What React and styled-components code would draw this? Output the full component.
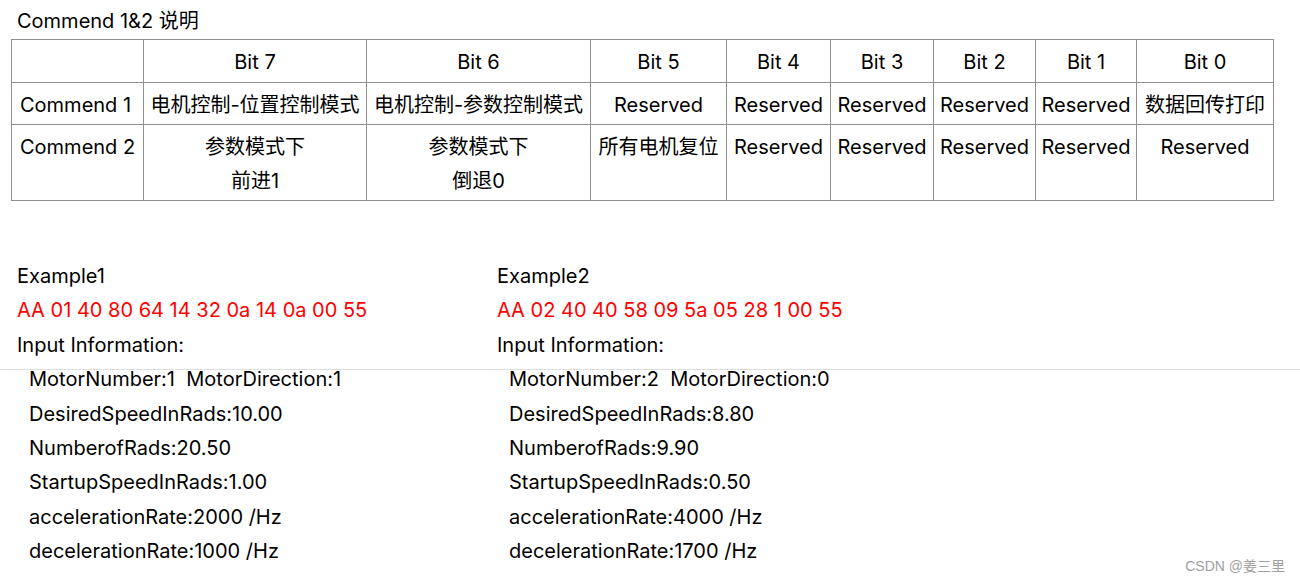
import React from "react";
import styled, { createGlobalStyle } from "styled-components";

const GlobalStyle = createGlobalStyle`
  html, body {
    margin: 0;
    padding: 0;
    background: #ffffff;
  }
  body {
    font-family: Inter, "Noto Sans CJK SC", sans-serif;
    color: #000000;
  }
`;

const Page = styled.div`
  position: relative;
  width: 1300px;
  height: 583px;
  overflow: hidden;
  padding: 4px 0 0 11px;
  box-sizing: border-box;
  font-size: 20px;
`;

const Title = styled.div`
  line-height: 34px;
  padding-left: 6px;
  margin-bottom: 1px;
`;

const Table = styled.table`
  border-collapse: collapse;
  table-layout: fixed;
  width: 1262px;
`;

const Col = styled.col`
  width: ${(p) => p.$w}px;
`;

const Cell = styled.td`
  border: 1px solid #8f8f8f;
  padding: 5px 0 ${(p) => (p.$head ? "3px" : "2px")};
  line-height: 34px;
  vertical-align: top;
  text-align: ${(p) => (p.$left ? "left" : "center")};
  padding-left: ${(p) => (p.$left ? "8px" : "0")};
  white-space: nowrap;
`;

const Examples = styled.div`
  display: grid;
  grid-template-columns: 480px 1fr;
  margin-top: 58px;
  padding-left: 6px;
`;

const ExampleBlock = styled.div`
  display: flex;
  flex-direction: column;
`;

const Line = styled.div`
  line-height: 34.4px;
  color: ${(p) => (p.$red ? "#ff0000" : "#000000")};
  padding-left: ${(p) => (p.$indent ? "12px" : "0")};
  white-space: pre;
`;

const Seam = styled.div`
  position: absolute;
  left: 0;
  right: 0;
  top: 369px;
  height: 1px;
  background: #dedede;
`;

const Watermark = styled.div`
  position: absolute;
  right: 15px;
  bottom: 8px;
  font-family: "Liberation Sans", "Noto Sans CJK SC", sans-serif;
  font-size: 14px;
  color: #a0a0a0;
`;

const widths = [132, 223, 224, 136, 104, 103, 102, 101, 137];

const rows = [
  {
    label: "Commend 1",
    cells: [
      "电机控制-位置控制模式",
      "电机控制-参数控制模式",
      "Reserved",
      "Reserved",
      "Reserved",
      "Reserved",
      "Reserved",
      "数据回传打印",
    ],
  },
  {
    label: "Commend 2",
    cells: [
      ["参数模式下", "前进1"],
      ["参数模式下", "倒退0"],
      "所有电机复位",
      "Reserved",
      "Reserved",
      "Reserved",
      "Reserved",
      "Reserved",
    ],
  },
];

const examples = [
  {
    name: "Example1",
    hex: "AA 01 40 80 64 14 32 0a 14 0a 00 55",
    info: [
      "MotorNumber:1  MotorDirection:1",
      "DesiredSpeedInRads:10.00",
      "NumberofRads:20.50",
      "StartupSpeedInRads:1.00",
      "accelerationRate:2000 /Hz",
      "decelerationRate:1000 /Hz",
    ],
  },
  {
    name: "Example2",
    hex: "AA 02 40 40 58 09 5a 05 28 1 00 55",
    info: [
      "MotorNumber:2  MotorDirection:0",
      "DesiredSpeedInRads:8.80",
      "NumberofRads:9.90",
      "StartupSpeedInRads:0.50",
      "accelerationRate:4000 /Hz",
      "decelerationRate:1700 /Hz",
    ],
  },
];

const App = () => {
  return (
    <Page>
      <GlobalStyle />
      <Title>Commend 1&amp;2 说明</Title>
      <Table>
        <colgroup>
          {widths.map((w, i) => (
            <Col key={i} $w={w} />
          ))}
        </colgroup>
        <tbody>
          <tr>
            <Cell $left $head />
            {[7, 6, 5, 4, 3, 2, 1, 0].map((b) => (
              <Cell $head key={b}>
                Bit {b}
              </Cell>
            ))}
          </tr>
          {rows.map((row) => (
            <tr key={row.label}>
              <Cell $left>{row.label}</Cell>
              {row.cells.map((c, i) => (
                <Cell key={i}>
                  {Array.isArray(c)
                    ? c.map((t) => <div key={t}>{t}</div>)
                    : c}
                </Cell>
              ))}
            </tr>
          ))}
        </tbody>
      </Table>
      <Examples>
        {examples.map((ex) => (
          <ExampleBlock key={ex.name}>
            <Line>{ex.name}</Line>
            <Line $red>{ex.hex}</Line>
            <Line>Input Information:</Line>
            {ex.info.map((t) => (
              <Line $indent key={t}>
                {t}
              </Line>
            ))}
          </ExampleBlock>
        ))}
      </Examples>
      <Seam />
      <Watermark>CSDN @姜三里</Watermark>
    </Page>
  );
};

export default App;
